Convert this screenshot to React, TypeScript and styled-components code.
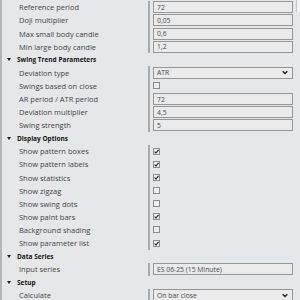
import { FC } from "react";
import styled, { createGlobalStyle } from "styled-components";

type Field =
    | { label: string, kind: "text", value: string }
    | { label: string, kind: "select", value: string }
    | { label: string, kind: "check", checked: boolean };

interface Section {
    title?: string,
    fields: Field[],
}

const sections: Section[] = [
    {
        fields: [
            { label: "Reference period", kind: "text", value: "72" },
            { label: "Doji multiplier", kind: "text", value: "0,05" },
            { label: "Max small body candle", kind: "text", value: "0,6" },
            { label: "Min large body candle", kind: "text", value: "1,2" },
        ],
    },
    {
        title: "Swing Trend Parameters",
        fields: [
            { label: "Deviation type", kind: "select", value: "ATR" },
            { label: "Swings based on close", kind: "check", checked: false },
            { label: "AR period / ATR period", kind: "text", value: "72" },
            { label: "Deviation multiplier", kind: "text", value: "4,5" },
            { label: "Swing strength", kind: "text", value: "5" },
        ],
    },
    {
        title: "Display Options",
        fields: [
            { label: "Show pattern boxes", kind: "check", checked: true },
            { label: "Show pattern labels", kind: "check", checked: true },
            { label: "Show statistics", kind: "check", checked: true },
            { label: "Show zigzag", kind: "check", checked: false },
            { label: "Show swing dots", kind: "check", checked: false },
            { label: "Show paint bars", kind: "check", checked: true },
            { label: "Background shading", kind: "check", checked: false },
            { label: "Show parameter list", kind: "check", checked: true },
        ],
    },
    {
        title: "Data Series",
        fields: [
            { label: "Input series", kind: "text", value: "ES 06-25 (15 Minute)" },
        ],
    },
    {
        title: "Setup",
        fields: [
            { label: "Calculate", kind: "select", value: "On bar close" },
        ],
    },
];

const ROW = 13.1;

const FieldValue: FC<{ field: Field }> = ({ field }) => {
    if (field.kind === "check") {
        return (
            <CheckBox>
                {field.checked && (
                    <svg width="5" height="5" viewBox="0 0 5 5">
                        <path d="M0.6 2.6 L2 4 L4.5 0.8" fill="none" stroke="#1e1e1e" strokeWidth="1.1" />
                    </svg>
                )}
            </CheckBox>
        );
    }
    return (
        <InputBox>
            <span>{field.value}</span>
            {field.kind === "select" && (
                <svg width="6" height="5" viewBox="0 0 6 5">
                    <path d="M0.7 1.2 L3 3.6 L5.3 1.2" fill="none" stroke="#222" strokeWidth="1.4" />
                </svg>
            )}
        </InputBox>
    );
};

const App: FC = () => {
    return (
        <>
            <GlobalStyle />
            <Wrapper>
                <Grid>
                    {sections.map((section, i) => (
                        <div key={i}>
                            {section.title && (
                                <Header>
                                    <Caret />
                                    {section.title}
                                </Header>
                            )}
                            <Group>
                                {section.fields.map((field) => (
                                    <Row key={field.label}>
                                        <Label>{field.label}</Label>
                                        <Value>
                                            <FieldValue field={field} />
                                        </Value>
                                    </Row>
                                ))}
                            </Group>
                        </div>
                    ))}
                </Grid>
                <ScrollTrack>
                    <Thumb />
                </ScrollTrack>
            </Wrapper>
        </>
    );
};

const GlobalStyle = createGlobalStyle`
    html, body {
        margin: 0;
        padding: 0;
        background: #e6e7e8;
        overflow: hidden;
    }
`;

const Wrapper = styled.div`
    display: flex;
    width: 300px;
    height: 300px;
    overflow: hidden;
    background: #e6e7e8;
    font-family: "Open Sans", "Noto Sans", sans-serif;
    font-size: 7.5px;
`;

const Grid = styled.div`
    flex: 1;
    border-left: 2px solid #b4b5b7;
    padding-top: 0.8px;
`;

const Header = styled.div`
    height: ${ROW}px;
    display: flex;
    align-items: center;
    padding-left: 5px;
    font-weight: 700;
    font-size: 6.5px;
    color: #141414;
`;

const Caret = styled.span`
    width: 0;
    height: 0;
    border-left: 2.5px solid transparent;
    border-right: 2.5px solid transparent;
    border-top: 3.5px solid #1c1c1c;
    margin-right: 6px;
`;

const Group = styled.div`
    display: grid;
    grid-template-columns: 146px 1fr;
`;

const Row = styled.div`
    display: contents;
`;

const Label = styled.div`
    height: ${ROW}px;
    display: flex;
    align-items: center;
    padding-left: 17px;
    color: #454545;
    white-space: nowrap;
`;

const Value = styled.div`
    height: ${ROW}px;
    display: flex;
    align-items: center;
    border-left: 2px solid #a9aaac;
    padding: 0 3px 0 3px;
`;

const InputBox = styled.div`
    flex: 1;
    height: 12px;
    box-sizing: border-box;
    border: 1px solid #959698;
    background: #ebebec;
    color: #4a4a4a;
    font-size: 6.8px;
    display: flex;
    align-items: center;
    justify-content: space-between;
    padding: 0 4px 0 3px;
`;

const CheckBox = styled.div`
    width: 7px;
    height: 7px;
    box-sizing: border-box;
    border: 1px solid #8c8d8f;
    background: #eeeeef;
    display: flex;
    align-items: center;
    justify-content: center;
`;

const ScrollTrack = styled.div`
    width: 4px;
`;

const Thumb = styled.div`
    height: 12px;
    background: #f3f3f4;
    border-left: 1px solid #c4c5c7;
`;

export default App;
